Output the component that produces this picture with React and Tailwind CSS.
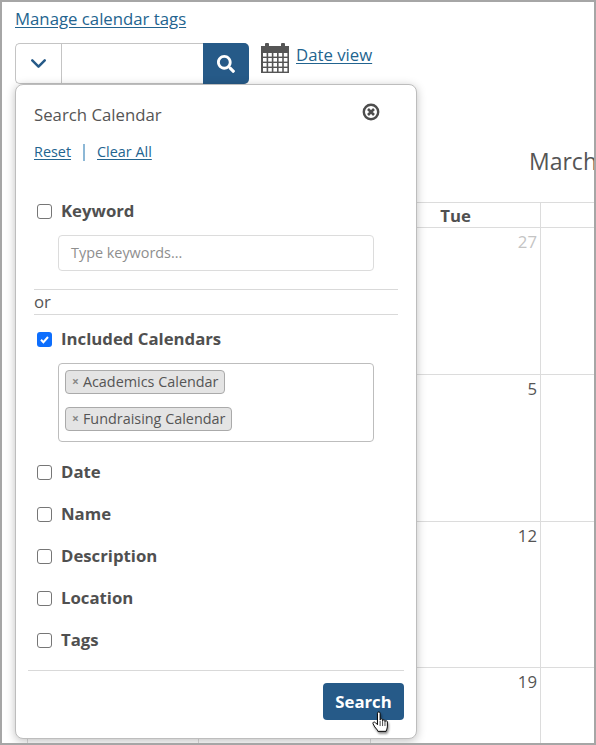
import { ChevronDown } from "lucide-react";
import { FaSearch } from "react-icons/fa";

const link = "text-[#23648f] underline underline-offset-2";

function CalendarIcon() {
  return (
    <svg width="28" height="30" viewBox="0 0 28 30">
      <rect x="4" y="0" width="4" height="5" rx="1" fill="#555" />
      <rect x="20" y="0" width="4" height="5" rx="1" fill="#555" />
      <path d="M0 3h28v27H0z" fill="#555" />
      <g fill="#fff">
        {[10, 15, 20, 25].map((y) =>
          [2, 7.2, 12.4, 17.6, 22.8].map((x) => (
            <rect key={`${x}-${y}`} x={x} y={y} width="3.6" height="3.6" />
          ))
        )}
      </g>
    </svg>
  );
}

function CloseIcon() {
  return (
    <svg width="18" height="18" viewBox="0 0 18 18">
      <circle cx="9" cy="9" r="7.2" fill="none" stroke="#4d4d4d" strokeWidth="2.4" />
      <path d="M6 6l6 6M12 6l-6 6" stroke="#4d4d4d" strokeWidth="2.6" />
    </svg>
  );
}

function HandCursor() {
  return (
    <svg
      width="18"
      height="23"
      viewBox="0 0 20 26"
      className="absolute left-[370px] top-[709px] drop-shadow-[1px_2px_1px_rgba(0,0,0,0.45)]"
    >
      <path
        d="M6 2.5c0-2 3-2 3 0V10c0-1.500 2.800-1.500 2.800 0v1c0-1.400 2.700-1.400 2.700 0v1c0-1.300 2.700-1.300 2.700.2V18c0 2-1 3-1.500 5H6.500c-.6-2-2-3-3.500-5L1 14.500c-.8-1.800 1.500-2.800 2.700-1.300L6 15.500z"
        fill="#fff"
        stroke="#000"
        strokeWidth="1.1"
        strokeLinejoin="round"
      />
      <path d="M9 11v6M11.800 11v6M14.500 12v5" stroke="#000" strokeWidth="0.8" />
    </svg>
  );
}

function Check({ label, checked = false }) {
  return (
    <label className="flex items-center gap-[9.5px] pl-[2.5px]">
      {checked ? (
        <span className="flex h-[15px] w-[15px] items-center justify-center rounded-[3px] bg-[#0d6efd]">
          <svg width="11" height="11" viewBox="0 0 11 11">
            <path d="M2 5.800 4.400 8.200 9 3" fill="none" stroke="#fff" strokeWidth="2" />
          </svg>
        </span>
      ) : (
        <span className="h-[15px] w-[15px] rounded-[3px] border border-[#767676] bg-white" />
      )}
      <span className="text-[16.75px] leading-[22px] font-bold text-[#505050]">{label}</span>
    </label>
  );
}

function Tag({ children }) {
  return (
    <span className="flex h-[24px] w-fit items-center rounded-[4px] border border-[#aaa] bg-[#e4e4e4] pr-[6px] pl-[6px] text-[14.4px] leading-[20px] text-[#555]">
      <span className="mr-[4px] text-[12px] font-bold text-[#888]">×</span>
      {children}
    </span>
  );
}

function SearchPopup() {
  return (
    <div className="absolute top-[82px] left-[13px] h-[655px] w-[402px] rounded-[8px] border border-[#bdbdbd] bg-white px-[12px] shadow-[0_2px_10px_rgba(0,0,0,0.25)]">
      <div className="px-[6px]">
        <div className="mt-[18px] flex items-start justify-between pr-[18px]">
          <span className="text-[16.75px] leading-[24px] text-[#555]">Search Calendar</span>
          <CloseIcon />
        </div>
        <div className="mt-[16px] flex h-[18px] items-center text-[14.4px]">
          <a className={link}>Reset</a>
          <span className="mx-[12px] h-[17px] w-[2px] bg-[#8db8d6]" />
          <a className={link}>Clear All</a>
        </div>
        <div className="mt-[39px]">
          <Check label="Keyword" />
        </div>
        <div className="mt-[13px] ml-[24px] flex h-[36px] w-[316px] items-center rounded-[4px] border border-[#dcdcdc] px-[12px] text-[14.4px] text-[#8e8e8e]">
          Type keywords...
        </div>
        <div className="mt-[18px] h-[26px] border-y border-[#d9d9d9] text-[16.75px] leading-[24px] text-[#555]">or</div>
        <div className="mt-[13px]">
          <Check label="Included Calendars" checked />
        </div>
        <div className="mt-[13px] ml-[24px] flex h-[79px] w-[316px] flex-col gap-[13px] rounded-[4px] border border-[#bdbdbd] px-[6px] pt-[6px]">
          <Tag>Academics Calendar</Tag>
          <Tag>Fundraising Calendar</Tag>
        </div>
        <div className="mt-[19px] flex flex-col gap-[20px]">
          <Check label="Date" />
          <Check label="Name" />
          <Check label="Description" />
          <Check label="Location" />
          <Check label="Tags" />
        </div>
      </div>
      <div className="mt-[19px] flex justify-end border-t border-[#d9d9d9] pt-[12px]">
        <button className="h-[37px] w-[81px] rounded-[4px] bg-[#265a88] text-[16.75px] font-bold text-white">
          Search
        </button>
      </div>
    </div>
  );
}

function CalendarGrid() {
  const rows = [
    { h: "h-[147px]", day: "27", muted: true },
    { h: "h-[147px]", day: "5" },
    { h: "h-[146px]", day: "12" },
    { h: "h-[100px]", day: "19" },
  ];
  return (
    <div className="ml-[25px] w-[700px]">
      <div className="grid h-[26px] grid-cols-[171px_172px_170px_187px] border-y border-[#dcdcdc]">
        <div className="border-l border-[#dcdcdc]" />
        <div className="border-l border-[#dcdcdc]" />
        <div className="flex items-center justify-center border-l border-[#dcdcdc] text-[16.75px] font-bold text-[#505050]">
          Tue
        </div>
        <div className="border-l border-[#dcdcdc]" />
      </div>
      {rows.map((r) => (
        <div key={r.day} className={`grid grid-cols-[171px_172px_170px_187px] border-b border-[#dcdcdc] ${r.h}`}>
          <div className="border-l border-[#dcdcdc]" />
          <div className="border-l border-[#dcdcdc]" />
          <div
            className={`border-l border-[#dcdcdc] pt-[2px] pr-[3px] text-right text-[16.75px] leading-[24px] ${
              r.muted ? "text-[#c4c4c4]" : "text-[#555]"
            }`}
          >
            {r.day}
          </div>
          <div className="border-l border-[#dcdcdc]" />
        </div>
      ))}
    </div>
  );
}

export default function App() {
  return (
    <div className="relative h-[745px] w-[596px] overflow-hidden border-2 border-[#a6a6a6] bg-white font-['Open_Sans',sans-serif]">
      <div className="px-[13px]">
        <a className={`${link} mt-[6px] block text-[16.75px] leading-[22px]`}>Manage calendar tags</a>
        <div className="mt-[13px] flex items-start">
          <div className="flex h-[41px] w-[234px] rounded-[5px] border border-r-0 border-[#c4c4c4]">
            <div className="flex w-[46px] items-center justify-center border-r border-[#c4c4c4]">
              <ChevronDown size={25} strokeWidth={2.4} className="text-[#265a88]" />
            </div>
            <div className="flex-1" />
            <div className="-my-px ml-auto flex w-[46px] items-center justify-center rounded-r-[5px] bg-[#265a88]">
              <FaSearch className="text-[18px] text-white" />
            </div>
          </div>
          <div className="ml-[12px]">
            <CalendarIcon />
          </div>
          <a className={`${link} ml-[7px] text-[16.75px] leading-[24px]`}>Date view</a>
        </div>
      </div>
      <div className="mt-[61px] flex h-[57px] justify-start pl-[527px] text-[23px] leading-[32px] whitespace-nowrap text-[#555]">
        March
      </div>
      <CalendarGrid />
      <SearchPopup />
      <HandCursor />
    </div>
  );
}
